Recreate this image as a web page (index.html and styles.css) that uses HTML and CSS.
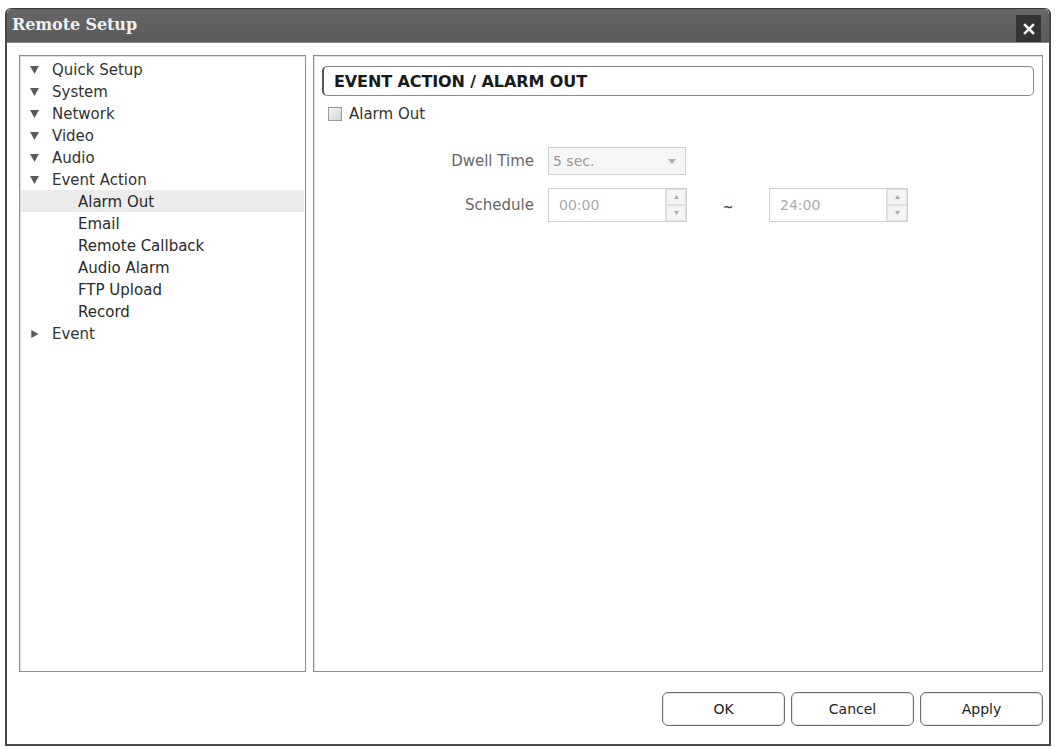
FILE: index.html
```html
<!DOCTYPE html>
<html>
<head>
<meta charset="utf-8">
<link rel="stylesheet" href="styles.css">
</head>
<body>
<div class="window">
  <div class="titlebar">
    <span class="title">Remote Setup</span>
    <span class="close"><svg width="12" height="12" viewBox="0 0 12 12"><path d="M2 2 L10 10 M10 2 L2 10" stroke="#eee" stroke-width="2.6" stroke-linecap="square"/></svg></span>
  </div>
  <div class="content">
    <div class="panels">
      <div class="tree">
        <div class="node"><svg class="tri" viewBox="0 0 10 9"><polygon points="0,0 10,0 5,9" fill="#5a5a5a"/></svg>Quick Setup</div>
        <div class="node"><svg class="tri" viewBox="0 0 10 9"><polygon points="0,0 10,0 5,9" fill="#5a5a5a"/></svg>System</div>
        <div class="node"><svg class="tri" viewBox="0 0 10 9"><polygon points="0,0 10,0 5,9" fill="#5a5a5a"/></svg>Network</div>
        <div class="node"><svg class="tri" viewBox="0 0 10 9"><polygon points="0,0 10,0 5,9" fill="#5a5a5a"/></svg>Video</div>
        <div class="node"><svg class="tri" viewBox="0 0 10 9"><polygon points="0,0 10,0 5,9" fill="#5a5a5a"/></svg>Audio</div>
        <div class="node"><svg class="tri" viewBox="0 0 10 9"><polygon points="0,0 10,0 5,9" fill="#5a5a5a"/></svg>Event Action</div>
        <div class="node sub selected">Alarm Out</div>
        <div class="node sub">Email</div>
        <div class="node sub">Remote Callback</div>
        <div class="node sub">Audio Alarm</div>
        <div class="node sub">FTP Upload</div>
        <div class="node sub">Record</div>
        <div class="node"><svg class="tri" viewBox="0 0 10 10"><polygon points="1,0 10,5 1,10" fill="#5a5a5a"/></svg>Event</div>
      </div>
      <div class="main">
        <div class="header">EVENT ACTION / ALARM OUT</div>
        <label class="check"><span class="box"></span>Alarm Out</label>
        <div class="form">
          <div class="row">
            <span class="lbl">Dwell Time</span>
            <div class="select"><span>5 sec.</span><svg width="8" height="5" viewBox="0 0 8 5"><polygon points="0,0 8,0 4,5" fill="#aaa"/></svg></div>
          </div>
          <div class="row">
            <span class="lbl">Schedule</span>
            <div class="spin"><span class="val">00:00</span><span class="arrows"><span class="ar"><svg width="5" height="4" viewBox="0 0 5 4"><polygon points="0,4 5,4 2.5,0" fill="#aaa"/></svg></span><span class="ar"><svg width="5" height="4" viewBox="0 0 5 4"><polygon points="0,0 5,0 2.5,4" fill="#aaa"/></svg></span></span></div>
            <span class="tilde">~</span>
            <div class="spin"><span class="val">24:00</span><span class="arrows"><span class="ar"><svg width="5" height="4" viewBox="0 0 5 4"><polygon points="0,4 5,4 2.5,0" fill="#aaa"/></svg></span><span class="ar"><svg width="5" height="4" viewBox="0 0 5 4"><polygon points="0,0 5,0 2.5,4" fill="#aaa"/></svg></span></span></div>
          </div>
        </div>
      </div>
    </div>
    <div class="buttons">
      <button class="btn">OK</button>
      <button class="btn">Cancel</button>
      <button class="btn">Apply</button>
    </div>
  </div>
</div>
</body>
</html>
```
FILE: styles.css
```css
html, body {
  margin: 0;
  padding: 0;
  background: #fff;
}
body {
  font-family: "DejaVu Sans", "Liberation Sans", sans-serif;
  font-size: 15px;
  color: #333;
}
.window {
  margin: 8px 0 0 5px;
  width: 1046px;
  height: 738px;
  box-sizing: border-box;
  border: 2px solid #474747;
  border-top: 1px solid #3a3a3a;
  border-radius: 6px 6px 0 0;
  display: flex;
  flex-direction: column;
  background: #fff;
}
.titlebar {
  height: 34px;
  background: linear-gradient(#666, #5a5a5a);
  display: flex;
  align-items: center;
  justify-content: space-between;
  padding: 0 8px 0 5px;
  border-radius: 5px 5px 0 0;
  border-bottom: 1px solid #8a8a8a;
}
.title {
  color: #f0f0f0;
  font-weight: bold;
  font-size: 16px;
  font-family: "DejaVu Serif", "Liberation Serif", serif;
  letter-spacing: -0.1px;
  margin-top: -2px;
}
.close {
  width: 25px;
  height: 27px;
  background: #333;
  display: flex;
  align-items: center;
  justify-content: center;
  margin-top: 6px;
}
.content {
  flex: 1;
  display: flex;
  flex-direction: column;
  padding: 12px 6px 18px 12px;
}
.panels {
  display: flex;
  gap: 7px;
  height: 617px;
}
.tree {
  width: 287px;
  box-sizing: border-box;
  border: 1px solid #8c8c8c;
  box-shadow: inset 1px 1px 0 #e0e0e0;
  padding-top: 2px;
}
.node {
  height: 22px;
  line-height: 22px;
  display: flex;
  align-items: center;
  padding-left: 10px;
  padding-top: 2px;
  box-sizing: border-box;
  color: #333;
  white-space: nowrap;
}
.tri {
  width: 9px;
  height: 8px;
  margin-right: 13px;
}
.node.sub {
  padding-left: 58px;
  color: #2a2a2a;
}
.node.selected {
  background: #ececec;
  margin-right: 1px;
  margin-left: 1px;
  padding-left: 57px;
}
.main {
  flex: 1;
  box-sizing: border-box;
  border: 1px solid #8c8c8c;
  box-shadow: inset 1px 1px 0 #e0e0e0;
  padding: 10px 8px 0 8px;
}
.header {
  height: 30px;
  box-sizing: border-box;
  border: 1px solid #8a8a8a;
  border-left: 2px solid #555;
  border-radius: 5px;
  font-weight: bold;
  font-size: 16px;
  color: #1a1a1a;
  display: flex;
  align-items: center;
  padding-left: 10px;
  letter-spacing: -0.1px;
}
.check {
  display: flex;
  align-items: center;
  height: 22px;
  margin-top: 7px;
  padding-left: 6px;
  color: #333;
}
.box {
  width: 12px;
  height: 12px;
  border: 1px solid #9a9a9a;
  background: linear-gradient(135deg, #f4f4f4, #d4d4d4);
  margin-right: 7px;
}
.form {
  margin-top: 22px;
  display: flex;
  flex-direction: column;
  gap: 13px;
}
.row {
  display: flex;
  align-items: center;
}
.lbl {
  width: 212px;
  text-align: right;
  margin-right: 14px;
  color: #666;
}
.select {
  width: 138px;
  height: 28px;
  box-sizing: border-box;
  border: 1px solid #cfcfcf;
  background: #f6f6f6;
  display: flex;
  align-items: center;
  justify-content: space-between;
  padding: 0 9px 0 4px;
  color: #999;
  font-size: 14px;
}
.spin {
  width: 139px;
  height: 34px;
  box-sizing: border-box;
  border: 1px solid #cfcfcf;
  display: flex;
  align-items: stretch;
  color: #aaa;
}
.val {
  flex: 1;
  display: flex;
  align-items: center;
  padding-left: 10px;
  font-size: 14px;
}
.arrows {
  width: 20px;
  display: flex;
  flex-direction: column;
  border-left: 1px solid #ddd;
}
.ar {
  flex: 1;
  display: flex;
  align-items: center;
  justify-content: center;
  background: #f4f4f4;
  border: 1px solid #e0e0e0;
}
.tilde {
  width: 82px;
  text-align: center;
  color: #444;
  font-weight: bold;
  font-size: 13px;
  padding-top: 3px;
}
.buttons {
  display: flex;
  justify-content: flex-end;
  gap: 6px;
  margin-top: 20px;
}
.btn {
  width: 123px;
  height: 34px;
  border: 1px solid #6e6e6e;
  border-radius: 6px;
  background: #fff;
  font-family: "DejaVu Sans", "Liberation Sans", sans-serif;
  font-size: 14px;
  color: #222;
  box-shadow: inset 0 0 0 1px #e6e6e6;
}
```
